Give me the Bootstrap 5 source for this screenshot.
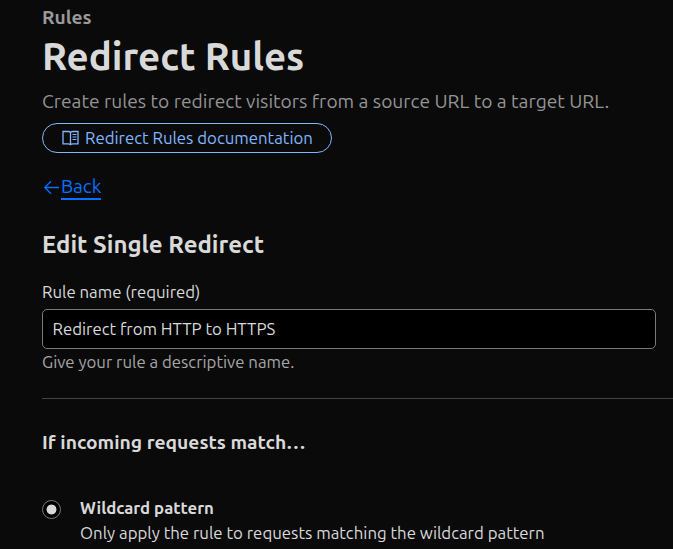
<!DOCTYPE html>
<html lang="en" data-bs-theme="dark">
<head>
<meta charset="utf-8">
<meta name="viewport" content="width=device-width, initial-scale=1">
<title>Redirect Rules</title>
<link href="https://cdn.jsdelivr.net/npm/bootstrap@5.3.0/dist/css/bootstrap.min.css" rel="stylesheet">
<style>
body{background:#0a0a0a;color:#d9d9d9;font-family:Ubuntu,"Noto Sans",sans-serif;font-size:16.8px;line-height:24px;overflow:hidden}
h1,h2,h3{color:#d9d9d9!important}
.page{padding:2px 0 0 42px;white-space:nowrap}
.eyebrow{font-size:19.2px;line-height:30px;color:#999}
.title{font-size:38.5px;line-height:48px}
.intro{font-size:19.2px;line-height:30px;margin-top:6px;color:#949494}
.doc-link{width:290px;height:30px;margin-top:7px;padding:0 0 0 19px;border:1px solid #82b6ff;color:#82b6ff;font-size:16.8px;line-height:28px}
.doc-link svg{margin-right:6px}
.back{height:27px;margin-top:20px;color:#086fff;font-size:19.2px}
.back span{height:27px;line-height:27px;border-bottom:2px solid #086fff;letter-spacing:-.1px}
.section-title{font-size:24px;line-height:30px;margin-top:30px}
.rule-label{margin-top:20px;line-height:24px}
.rule-input,.rule-input:focus{width:614px;height:40px;margin-top:5px;padding:0 9.5px 2px;border:1px solid #797979;border-radius:5px;background:#000;color:#d9d9d9;font-size:16.8px;box-shadow:none}
.hint{margin-top:1px;line-height:24px;color:#a6a6a6}
.divider{margin:24px 0 0;border-top:1px solid #444;opacity:1}
.match-title{font-size:19.25px;line-height:30px;margin-top:28px}
.choice{margin-top:39px;gap:19px}
.choice .form-check-input{width:19px;height:19px;margin:4px 0 0;border:1px solid #797979;background:#000 radial-gradient(circle,#d9d9d9 4.6px,transparent 5.3px);box-shadow:none}
.choice-text{margin-top:1px;font-size:16.82px}
</style>
</head>
<body>
<main class="page">
  <div class="eyebrow fw-semibold">Rules</div>
  <h1 class="title fw-semibold mb-0">Redirect Rules</h1>
  <p class="intro mb-0">Create rules to redirect visitors from a source URL to a target URL.</p>
  <a class="doc-link d-flex align-items-center rounded-pill text-decoration-none" href="#">
    <svg width="17" height="16" viewBox="0 0 17 16" fill="none" stroke="currentColor" aria-hidden="true"><path d="M8.5 2.2C7.8 1.6 7 1.5 6 1.5H1v12.3h5c1 0 1.9.1 2.5.8.6-.7 1.5-.8 2.5-.8h5V1.5h-5c-1 0-1.8.1-2.5.7zm0 0v12.4" stroke-width="1.3"/><path d="M10.5 4.5h4M10.5 7h4M10.5 9.5h4"/></svg>
    <span>Redirect Rules documentation</span>
  </a>
  <a class="back d-flex align-items-start text-decoration-none" href="#">
    <svg width="19" height="27" viewBox="0 0 19 27" fill="none" stroke="currentColor" stroke-width="1.3" aria-hidden="true"><path d="M17 14.5H3M9 8.3l-6.2 6.2L9 20.7"/></svg>
    <span>Back</span>
  </a>
  <h2 class="section-title fw-semibold mb-0">Edit Single Redirect</h2>
  <form>
    <label class="rule-label d-block" for="rule-name">Rule name (required)</label>
    <input class="rule-input form-control" id="rule-name" type="text" value="Redirect from HTTP to HTTPS">
    <div class="hint">Give your rule a descriptive name.</div>
    <hr class="divider">
    <h3 class="match-title fw-semibold mb-0">If incoming requests match…</h3>
    <div class="choice d-flex align-items-start">
      <input class="form-check-input flex-shrink-0" type="radio" name="match" id="wildcard" checked>
      <label for="wildcard">
        <span class="choice-name d-block fw-semibold">Wildcard pattern</span>
        <span class="choice-text d-block">Only apply the rule to requests matching the wildcard pattern</span>
      </label>
    </div>
  </form>
</main>
<script src="https://cdn.jsdelivr.net/npm/bootstrap@5.3.0/dist/js/bootstrap.bundle.min.js"></script>
</body>
</html>
